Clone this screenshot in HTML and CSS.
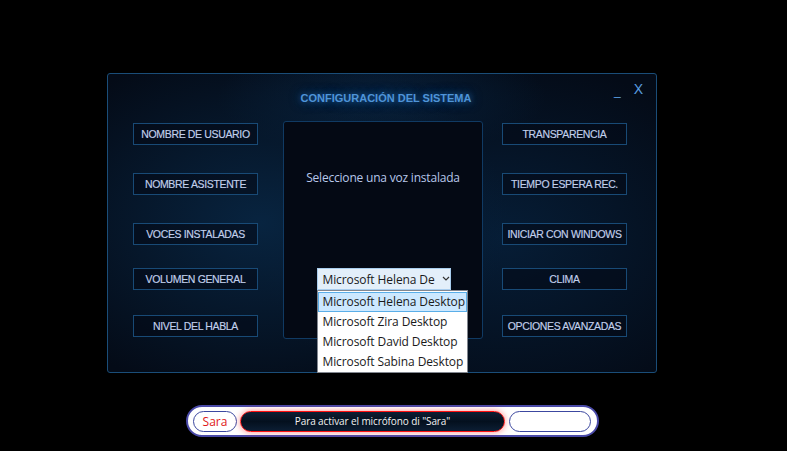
FILE: index.html
```html
<!DOCTYPE html>
<html lang="es">
<head>
<meta charset="utf-8">
<title>Configuración del sistema</title>
<link rel="stylesheet" href="styles.css">
</head>
<body>
<div class="stage">
  <div class="panel">
    <div class="header">
      <div class="title">CONFIGURACIÓN DEL SISTEMA</div>
      <div class="win-controls">
        <span class="min">_</span>
        <span class="close">X</span>
      </div>
    </div>
    <div class="content">
      <div class="col col-left">
        <div class="btn">NOMBRE DE USUARIO</div>
        <div class="btn">NOMBRE ASISTENTE</div>
        <div class="btn">VOCES INSTALADAS</div>
        <div class="btn">VOLUMEN GENERAL</div>
        <div class="btn">NIVEL DEL HABLA</div>
      </div>
      <div class="center-box">
        <div class="voz-label">Seleccione una voz instalada</div>
        <div class="select-wrap">
          <div class="select">
            <span class="select-text">Microsoft Helena De</span>
            <svg class="chev" width="8" height="5" viewBox="0 0 8 5"><path d="M1 1 L4 4 L7 1" fill="none" stroke="#333" stroke-width="1.2"/></svg>
          </div>
          <div class="dropdown">
            <div class="opt opt-active">Microsoft Helena Desktop</div>
            <div class="opt">Microsoft Zira Desktop</div>
            <div class="opt">Microsoft David Desktop</div>
            <div class="opt">Microsoft Sabina Desktop</div>
          </div>
        </div>
      </div>
      <div class="col col-right">
        <div class="btn">TRANSPARENCIA</div>
        <div class="btn">TIEMPO ESPERA REC.</div>
        <div class="btn">INICIAR CON WINDOWS</div>
        <div class="btn">CLIMA</div>
        <div class="btn">OPCIONES AVANZADAS</div>
      </div>
    </div>
  </div>
  <div class="bar">
    <div class="pill pill-name">Sara</div>
    <div class="pill pill-msg">Para activar el micrófono di "Sara"</div>
    <div class="pill pill-empty"></div>
  </div>
</div>
</body>
</html>
```
FILE: styles.css
```css
html, body {
  margin: 0;
  padding: 0;
  background: #000;
  width: 787px;
  height: 451px;
  overflow: hidden;
}

.stage {
  display: flex;
  flex-direction: column;
  padding-top: 73px;
}

.panel {
  margin-left: 107px;
  width: 548px;
  height: 298px;
  border: 1px solid #1a4d78;
  border-radius: 3px;
  background:
    radial-gradient(ellipse 45% 60% at 28% 50%, #082440 0%, rgba(7,32,58,0) 100%),
    radial-gradient(ellipse 45% 60% at 72% 55%, #061d36 0%, rgba(6,28,52,0) 100%),
    radial-gradient(ellipse 30% 20% at 50% 8%, #08203a 0%, rgba(8,32,58,0) 100%),
    #040b17;
  display: flex;
  flex-direction: column;
  font-family: "Liberation Sans", Arial, sans-serif;
}

.header {
  position: relative;
  height: 47px;
  display: flex;
  justify-content: center;
}

.title {
  margin-top: 18px;
  margin-left: 8px;
  font-size: 11px;
  line-height: 13px;
  font-weight: bold;
  color: #4f94d8;
  text-shadow: 0 0 6px #1d5a9a, 0 0 12px #123e6e;
  letter-spacing: 0;
}

.win-controls {
  position: absolute;
  right: 13px;
  top: 7px;
  display: flex;
  gap: 13px;
  color: #5a9ee0;
  font-family: "Liberation Sans", Arial, sans-serif;
}

.min {
  font-size: 12px;
  line-height: 12px;
  margin-top: 4px;
}

.close {
  font-size: 14px;
  line-height: 16px;
}

.content {
  display: flex;
  padding-left: 25px;
}

.col {
  width: 125px;
  display: flex;
  flex-direction: column;
  padding-top: 2px;
}

.col-right {
  margin-left: 19px;
}

.btn {
  box-sizing: border-box;
  height: 22px;
  border: 1px solid #184a76;
  background: rgba(3, 10, 22, 0.55);
  color: #c2d0ec;
  font-size: 10.5px;
  display: flex;
  align-items: center;
  justify-content: center;
  white-space: nowrap;
  letter-spacing: -0.35px;
  -webkit-text-stroke: 0.15px #c2d0ec;
}

.btn:nth-child(2), .btn:nth-child(3) { margin-top: 28px; }
.btn:nth-child(4) { margin-top: 23px; }
.btn:nth-child(5) { margin-top: 25px; }

.center-box {
  box-sizing: border-box;
  margin-left: 25px;
  width: 200px;
  height: 218px;
  border: 1px solid #103a63;
  border-radius: 3px;
  background: #040914;
  display: flex;
  flex-direction: column;
  align-items: center;
}

.voz-label {
  margin-top: 48px;
  font-family: "Open Sans", "Noto Sans", sans-serif;
  font-size: 12px;
  line-height: 16px;
  color: #b7c7ea;
  letter-spacing: -0.2px;
}

.select-wrap {
  position: relative;
  margin-top: 82px;
  margin-left: 1px;
  width: 134px;
}

.select {
  box-sizing: border-box;
  height: 22px;
  background: #e3effa;
  border: 1px solid #a9cdee;
  display: flex;
  align-items: center;
  padding-left: 5px;
  font-family: "Open Sans", "Noto Sans", sans-serif;
  font-size: 12px;
  color: #1a1a1a;
  overflow: hidden;
}

.select-text {
  width: 112px;
  overflow: hidden;
  white-space: nowrap;
  letter-spacing: -0.1px;
}

.chev {
  margin-left: 7px;
  margin-top: -2px;
}

.dropdown {
  position: absolute;
  left: 0;
  top: 22px;
  box-sizing: border-box;
  width: 151px;
  background: #fff;
  border: 1px solid #828790;
  padding: 1px 0 0;
  font-family: "Open Sans", "Noto Sans", sans-serif;
  font-size: 12px;
  color: #1a1a1a;
  z-index: 2;
}

.opt {
  box-sizing: border-box;
  height: 20px;
  line-height: 18px;
  padding-left: 4px;
  border: 1px solid transparent;
  white-space: nowrap;
  letter-spacing: -0.1px;
}

.opt-active {
  background: #cce8ff;
  border-color: #5aaee8;
}

.bar {
  box-sizing: border-box;
  margin-top: 32px;
  margin-left: 186px;
  width: 413px;
  height: 32px;
  border: 2px solid #4a4aa8;
  border-radius: 16px;
  background: #fff;
  display: flex;
  align-items: center;
  padding-left: 5px;
  gap: 3px;
}

.pill {
  box-sizing: border-box;
  height: 21px;
  border-radius: 11px;
  display: flex;
  align-items: center;
  justify-content: center;
  font-family: "Open Sans", "Noto Sans", sans-serif;
}

.pill-name {
  width: 44px;
  border: 1px solid #3c48a0;
  color: #e01818;
  font-size: 12px;
}

.pill-msg {
  width: 265px;
  border: 1.5px solid #ff1010;
  background: linear-gradient(#0c1e34, #04101e 50%, #0c1e34);
  color: #f2f2f2;
  font-size: 10px;
  letter-spacing: -0.1px;
  box-shadow: 0 0 6px rgba(255, 40, 40, 0.55);
}

.pill-empty {
  margin-left: 1px;
  width: 82px;
  border: 1px solid #3c48a0;
  background: #fff;
}
```
